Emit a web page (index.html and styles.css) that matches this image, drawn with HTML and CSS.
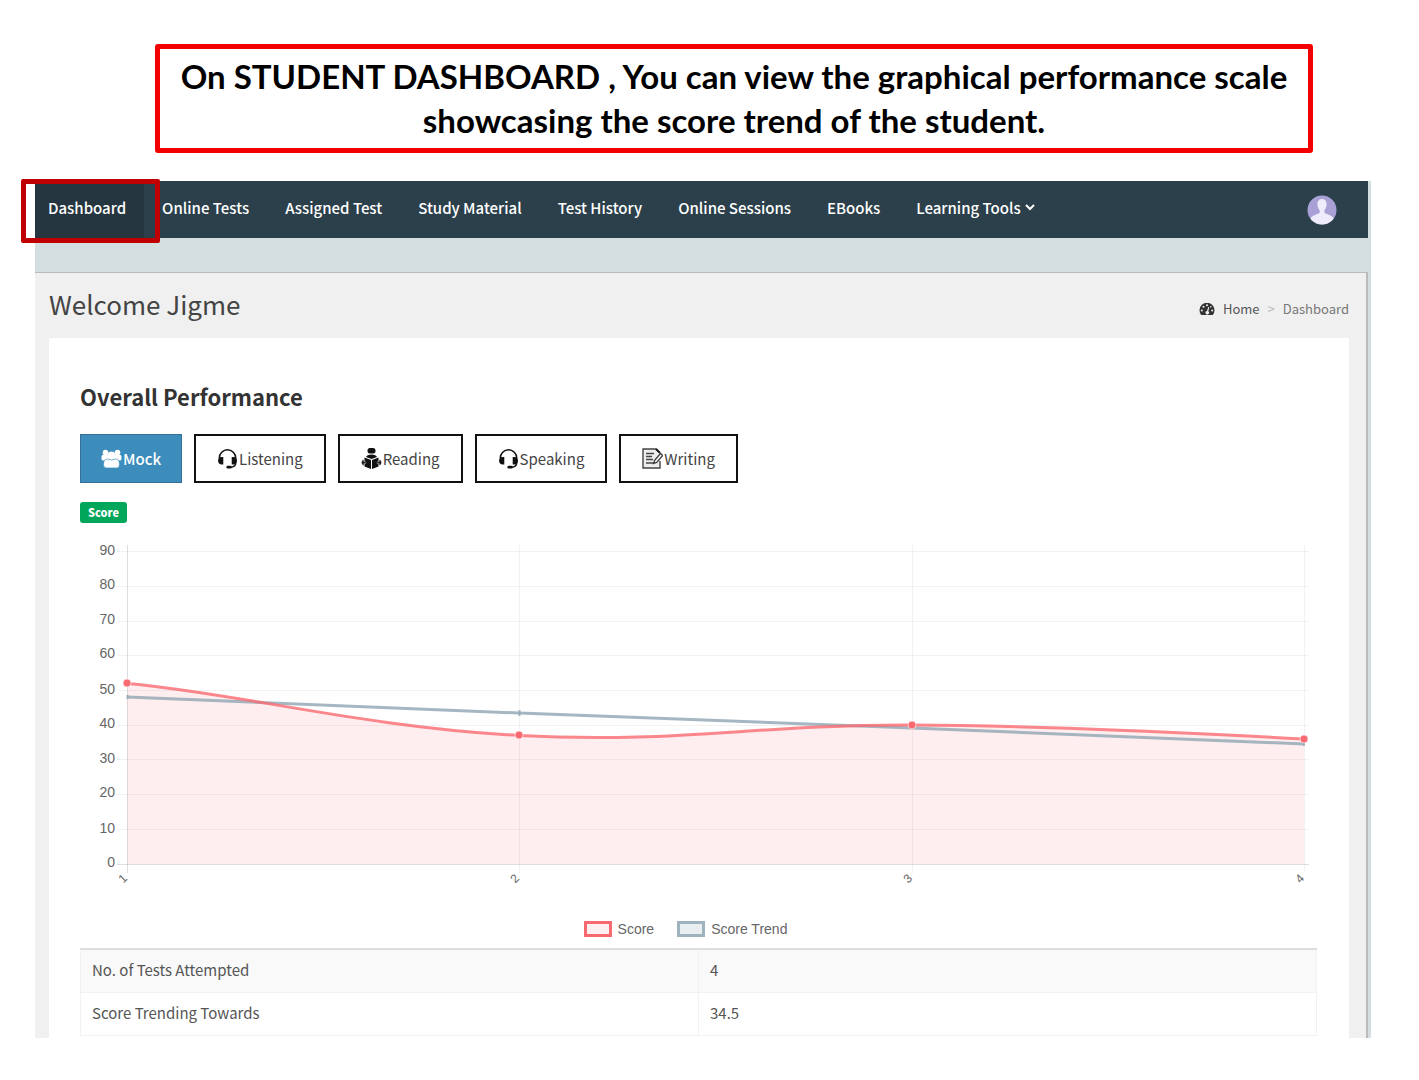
FILE: index.html
```html
<!DOCTYPE html>
<html lang="en">
<head>
<meta charset="utf-8">
<meta name="viewport" content="width=device-width, initial-scale=1">
<title>Student Dashboard</title>
<link rel="stylesheet" href="styles.css">
</head>
<body>
<svg class="sprite" aria-hidden="true">
  <symbol id="headset" viewBox="0 0 20 20">
    <path d="M2.200 10V9.500a7.800 7.800 0 0 1 15.600 0V14q0 4-5 4.300" fill="none" stroke="#111" stroke-width="1.500"/>
    <path d="M6 8.500v7.300H4.500C2.500 15.800 1 14.500 1 12.200s1.500-3.700 3.500-3.700zM14 8.500v7.300h1.500c2 0 3.500-1.300 3.500-3.600s-1.500-3.700-3.500-3.700z" fill="#111"/>
    <rect x="9" y="17" width="5" height="2.600" rx="1.300" fill="#111"/>
  </symbol>
</svg>
<p class="callout">On STUDENT DASHBOARD , You can view the graphical performance scale showcasing the score trend of the student.</p>
<div class="app">
  <nav class="topbar">
    <ul class="menu">
      <li class="active"><a href="#">Dashboard</a><span class="marker"></span></li>
      <li><a href="#">Online Tests</a></li>
      <li><a href="#">Assigned Test</a></li>
      <li><a href="#">Study Material</a></li>
      <li><a href="#">Test History</a></li>
      <li><a href="#">Online Sessions</a></li>
      <li><a href="#">EBooks</a></li>
      <li><a href="#">Learning Tools <svg width="10" height="7" viewBox="0 0 10 7"><path d="M1 1l4 4 4-4" fill="none" stroke="#fff" stroke-width="2"/></svg></a></li>
    </ul>
    <a class="avatar" href="#" aria-label="Profile">
      <svg width="30" height="30" viewBox="0 0 30 30"><defs><clipPath id="c"><circle cx="15" cy="15" r="14.500"/></clipPath></defs><circle cx="15" cy="15" r="14.500" fill="#a9a1d6"/><g clip-path="url(#c)" fill="#eeebfa"><path d="M15 4c3.200 0 4.800 2.300 4.600 5.500-.1 2.500-1.100 4.500-2.200 5.800v2.500c1 1.500 8.600 2 10 7.200V31H3v-6c1.200-5.200 8.800-5.700 9.700-7.200v-2.500c-1.200-1.300-2.200-3.300-2.300-5.800C10.200 6.300 11.800 4 15 4z"/></g></svg>
    </a>
  </nav>
  <main class="content">
    <header class="page-head">
      <h1>Welcome Jigme</h1>
      <div class="crumbs">
        <a href="#"><svg width="16" height="12" viewBox="0 0 16 12"><path d="M2.200 12A7.500 7.500 0 1 1 13.800 12z" fill="#333"/><g fill="#f0f0f0"><circle cx="2.800" cy="7.500" r="1"/><circle cx="4.500" cy="3.700" r="1"/><circle cx="8" cy="2.200" r="1"/><circle cx="13.200" cy="7.500" r="1"/><circle cx="11.800" cy="3.700" r=".8"/><path d="M9.300 4l1 .3-1 4A1.700 1.700 0 1 1 8 8z"/></g></svg>Home</a>
        <span class="sep">&gt;</span><span>Dashboard</span>
      </div>
    </header>
    <section class="panel">
      <h2>Overall Performance</h2>
      <div class="tabs">
        <button type="button" class="selected"><svg width="21" height="20" viewBox="0 0 21 20" fill="#fff"><circle cx="4.500" cy="3.500" r="2.800"/><circle cx="16.500" cy="3.500" r="2.800"/><path d="M.5 10V8q0-2.500 2.500-2.500h15q2.500 0 2.500 2.500v2q0 1.500-2 1.500h-16q-2 0-2-1.500z"/><circle cx="10.500" cy="6.200" r="3.800"/><path d="M2.500 15.500q0-5.500 4-5.500 4 2 8 0 4 0 4 5.500 0 3.500-2.500 3.500H5q-2.500 0-2.500-3.500z" stroke="#3c8dbc" stroke-width=".7"/></svg>Mock</button>
        <button type="button"><svg width="21" height="21"><use href="#headset"/></svg>Listening</button>
        <button type="button"><svg width="21" height="21" viewBox="0 0 21 21" fill="#111"><rect x="6.500" y="0" width="8" height="5.500" rx="2.500"/><path d="M5 9q1-2.500 5.500-2.500T16 9l-5.500 2z"/><path d="M3.500 9.500l6.500 2.500V21l-6.500-2.500zM17.500 9.500L11 12V21l6.500-2.500z"/><path d="M2.800 11.500v2.300H5v1.700H2.800v2.200Q.5 17 .5 14.600t2.300-3.100zM18.200 11.500v2.300H16v1.700h2.200v2.200q2.300-.7 2.300-3.100t-2.300-3.100z" stroke="#fff" stroke-width=".3"/></svg>Reading</button>
        <button type="button"><svg width="21" height="21"><use href="#headset"/></svg>Speaking</button>
        <button type="button"><svg width="21" height="21" viewBox="0 0 21 21" fill="none" stroke="#444" stroke-width="1.400"><path d="M14.500 1H1v19h17v-7" fill="#eee"/><path d="M4 5.500h8M4 8.500h6M4 11.500h7M4 15h8"/><path d="M14 1l4 4" stroke="#111" stroke-width="2"/><path d="M12.500 12.500l6-7 2.200 2-6 7-3 1z" fill="#fff"/></svg>Writing</button>
      </div>
      <span class="badge">Score</span>
      <svg class="chart" viewBox="0 0 1237 352" role="img" aria-label="Score and score trend">
        <g class="grid">
          <path d="M37 15.500H1229M37 50.500H1229M37 85.500H1229M37 119.500H1229M37 154.500H1229M37 189.500H1229M37 223.500H1229M37 258.500H1229M37 293.500H1229M439.500 9V337M832.500 9V337M1224.500 9V337"/>
          <path class="axis" d="M37 328.500H1229M47.500 9V337"/>
        </g>
        <path class="score-fill" d="M47.500 147.500C157 157 282 191 439 199.500S675 188.300 832 189 1224 203 1224 203V328H47.500z"/>
        <path class="trend-line" d="M47.500 161L439 177 832 192 1224 208"/>
        <path class="trend-line tick" d="M47.500 159v4M439.500 174v6M1224 206v4"/>
        <path class="score-line" d="M47.500 147.500C157 157 282 191 439 199.500S675 188.300 832 189 1224 203 1224 203"/>
        <g class="points"><circle cx="47" cy="147" r="4"/><circle cx="439" cy="199" r="4"/><circle cx="832" cy="189" r="4"/><circle cx="1224" cy="203" r="4"/></g>
        <g class="y-labels">
          <text x="35" y="19">90</text><text x="35" y="53">80</text><text x="35" y="88">70</text><text x="35" y="122">60</text><text x="35" y="158">50</text><text x="35" y="192">40</text><text x="35" y="227">30</text><text x="35" y="261">20</text><text x="35" y="297">10</text><text x="35" y="331">0</text>
        </g>
        <g class="x-labels">
          <text transform="translate(48 343) rotate(-45)">1</text><text transform="translate(440 343) rotate(-45)">2</text><text transform="translate(833 343) rotate(-45)">3</text><text transform="translate(1225 343) rotate(-45)">4</text>
        </g>
      </svg>
      <div class="legend">
        <span class="key"><i class="swatch score"></i>Score</span>
        <span class="key"><i class="swatch trend"></i>Score Trend</span>
      </div>
      <table>
        <tbody>
          <tr><th scope="row">No. of Tests Attempted</th><td>4</td></tr>
          <tr><th scope="row">Score Trending Towards</th><td>34.5</td></tr>
        </tbody>
      </table>
    </section>
  </main>
</div>
</body>
</html>
```
FILE: styles.css
```css
* { box-sizing: border-box; }
body {
  margin: 0;
  padding: 44px 48px 40px 35px;
  background: #fff;
  color: #555;
  font: 15px/20px "Noto Sans CJK SC", "Open Sans", sans-serif;
}
a { color: inherit; text-decoration: none; }
.sprite { position: absolute; width: 0; height: 0; }

.callout {
  margin: 0 58px 28px 120px;
  padding: 5px 8px 6px;
  border: 5px solid #f20000;
  border-radius: 3px;
  color: #000;
  font: bold 33px/44px Lato, sans-serif;
  text-align: center;
}

.app { background: #d5dfe1; padding-right: 3px; }
.topbar {
  display: flex;
  justify-content: space-between;
  align-items: center;
  height: 57px;
  padding-right: 31px;
  background: #2b404b;
  color: #fff;
  font-weight: 500;
}
.menu {
  display: flex;
  align-self: stretch;
  margin: 0;
  padding: 0;
  list-style: none;
}
.menu li { position: relative; display: flex; }
.menu a {
  display: flex;
  align-items: center;
  gap: 4px;
  padding: 0 18px 4px;
  white-space: nowrap;
}
.menu .active a { padding-left: 13px; background: #263640; }
.marker {
  position: absolute;
  z-index: 1;
  inset: -2px -16px -5px -14px;
  border: 5px solid #c00000;
  border-radius: 2px;
  pointer-events: none;
}
.avatar, .avatar svg { display: block; }

.content {
  margin-top: 34px;
  padding: 0 17px 0 14px;
  border-top: 1px solid #bbb;
  border-right: 2px solid #bbb;
  background: #f0f0f0;
}
.page-head {
  display: flex;
  justify-content: space-between;
  align-items: center;
  height: 65px;
}
h1 { margin: 0; padding-bottom: 3px; font-size: 26px; line-height: 36px; font-weight: 400; color: #444; }
.crumbs { display: flex; gap: 8px; padding-top: 6px; font-size: 13px; color: #777; }
.crumbs a { display: flex; align-items: center; gap: 8px; color: #555; }
.sep { color: #bbb; }

.panel { padding: 44px 32px 2px 31px; background: #fff; }
h2 { margin: 0; font-size: 22px; line-height: 28px; font-weight: 700; color: #333; }
.tabs { display: flex; flex-wrap: wrap; gap: 12px; margin: 24px 0 19px; }
.tabs button {
  display: flex;
  align-items: center;
  gap: 1px;
  height: 49px;
  padding: 0 21px;
  border: 2px solid #111;
  background: #fff;
  color: #444;
  font: inherit;
}
.tabs .selected { padding: 0 20px; border: 1px solid #367096; background: #3c8dbc; color: #fff; font-weight: 500; }
.badge {
  display: block;
  width: fit-content;
  padding: 0 8px;
  border-radius: 3px;
  background: #00a65a;
  color: #fff;
  font-size: 11px;
  line-height: 21px;
  font-weight: 900;
}

.chart { display: block; width: 100%; height: auto; margin-top: 13px; }
.grid path { fill: none; stroke: rgba(0, 0, 0, .05); }
.grid .axis { stroke: rgba(0, 0, 0, .13); }
.score-fill { fill: rgba(249, 100, 105, .11); }
.score-line { fill: none; stroke: #f96a70; stroke-opacity: .8; stroke-width: 3; }
.trend-line { fill: none; stroke: #8fa5b3; stroke-opacity: .8; stroke-width: 3; }
.tick { stroke-width: 2; }
.points circle { fill: #f96a70; stroke: #fff; stroke-opacity: .6; }
.chart text { fill: #666; font-family: "Liberation Sans", sans-serif; font-size: 14px; }
.chart .x-labels text { font-size: 12px; }
.chart text { text-anchor: end; }

.legend {
  display: flex;
  justify-content: center;
  gap: 23px;
  padding: 31px 26px 9px 0;
  color: #666;
  font-family: "Liberation Sans", sans-serif;
  font-size: 14px;
}
.key { display: flex; align-items: center; gap: 6px; }
.swatch { width: 28px; height: 16px; border: 3px solid; }
.swatch.score { border-color: #f96a70; background: #feeff0; }
.swatch.trend { border-color: #9fb3bf; background: #e9eef1; }

table { width: 100%; table-layout: fixed; border-collapse: collapse; border-top: 2px solid #ddd; }
th, td {
  height: 43px;
  padding: 0 11px 2px;
  border: 1px solid #f2f2f2;
  font-weight: 400;
  text-align: left;
}
tr:first-child > * { background: #f9f9f9; border-top: 2px solid #ddd; }
```
